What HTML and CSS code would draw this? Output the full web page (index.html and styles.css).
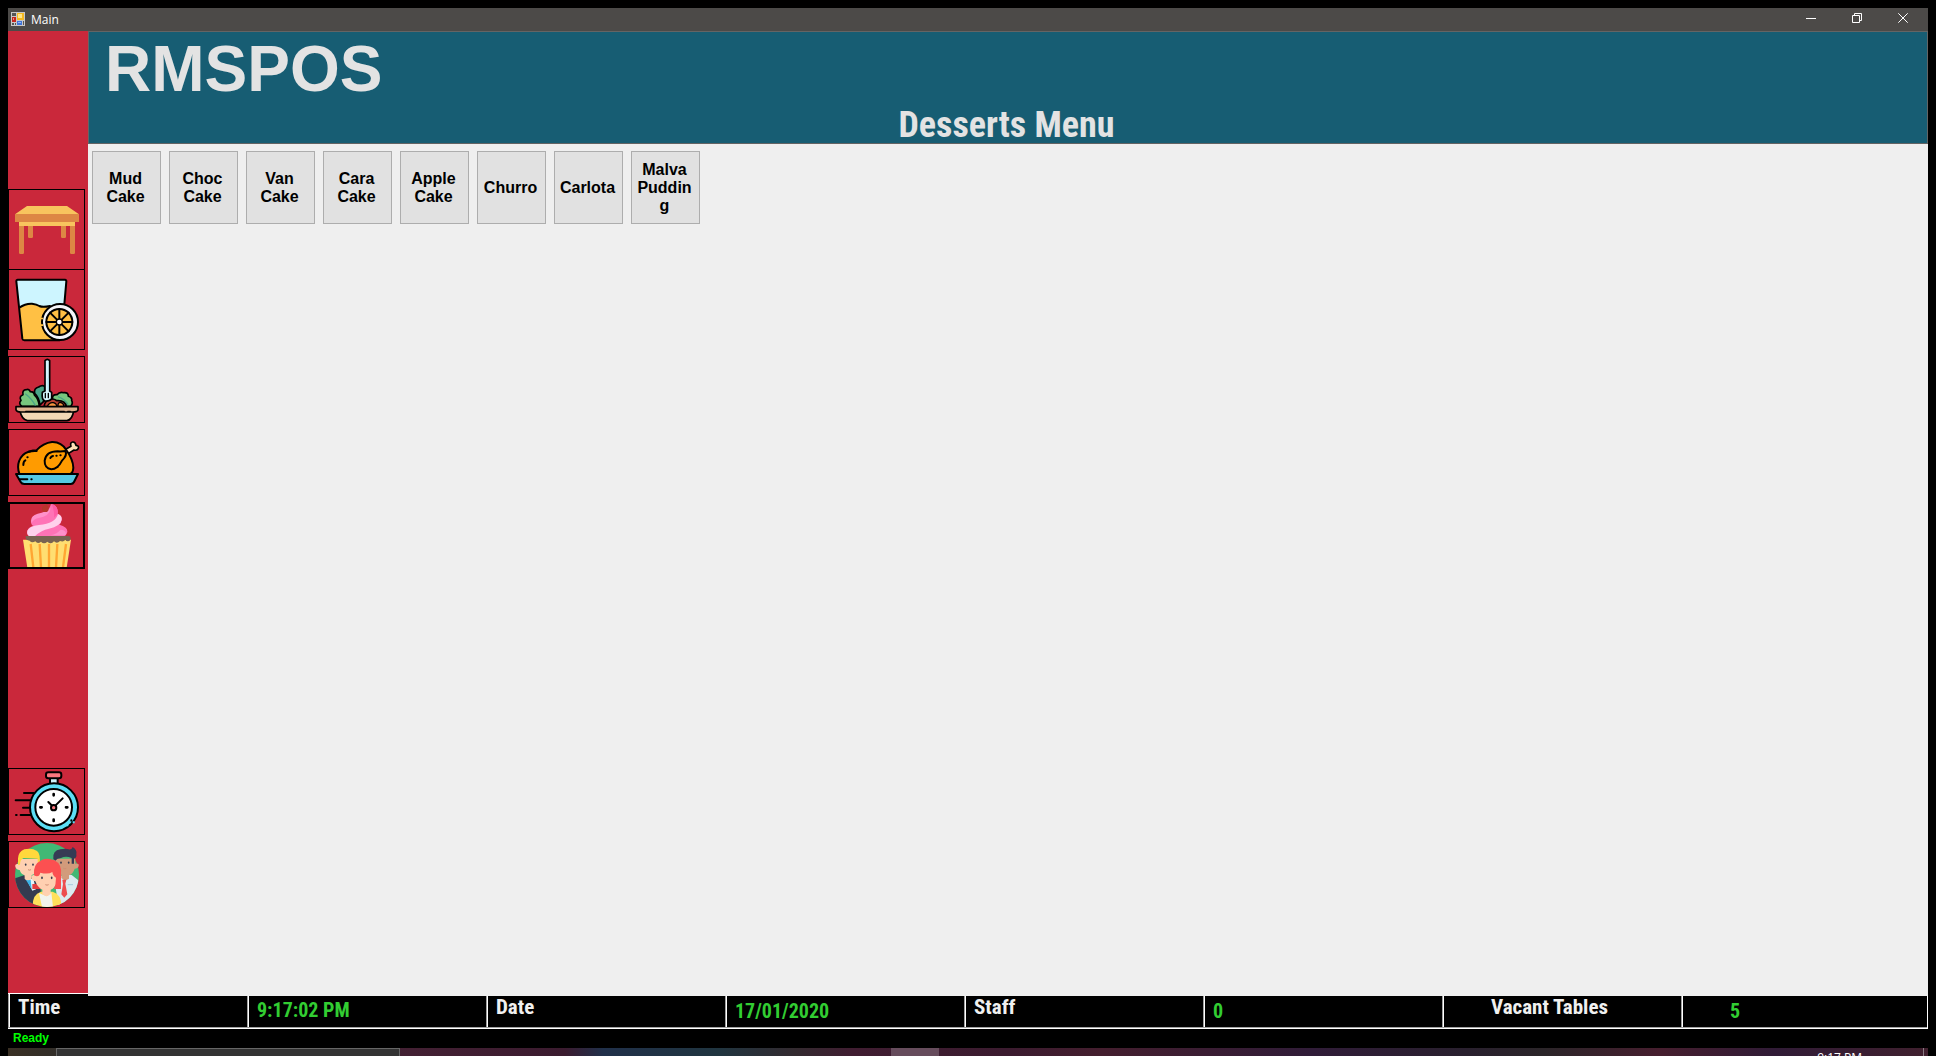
FILE: index.html
```html
<!DOCTYPE html>
<html lang="en">
<head>
<meta charset="utf-8">
<title>Main</title>
<link rel="stylesheet" href="styles.css">
</head>
<body>
<div class="titlebar">
  <svg class="app-icon" viewBox="0 0 14 14" aria-hidden="true">
    <path fill="#c8c8c8" d="M0 0h14v14H0z"/>
    <path fill="#555" d="M1 1h4v3H1zM1 11h2v2H1zM4 11h1v2H4zM12 9h1v4h-1z"/>
    <path fill="#c4261d" d="M1 5h4v5H1z"/><path fill="#f08a80" d="M2 6h1v2H2z"/>
    <path fill="#f5b921" d="M6 1h7v7H6z"/><path fill="#ffe68a" d="M7 2h4v4H7z"/>
    <path fill="#3f74d8" d="M6 9h5v4H6z"/><path fill="#8fb4f5" d="M7 10h3v1H7z"/>
  </svg>
  <span class="caption">Main</span>
  <div class="window-buttons">
    <button type="button" aria-label="Minimize"><svg viewBox="0 0 10 10"><path d="M0 5.500h10"/></svg></button>
    <button type="button" aria-label="Restore"><svg viewBox="0 0 10 10"><path d="M.5 2.500h7v7h-7zM2.500 2.500v-2h7v7h-2"/></svg></button>
    <button type="button" aria-label="Close"><svg viewBox="0 0 10 10"><path d="M.3.3l9.400 9.400M9.700.3L.3 9.700"/></svg></button>
  </div>
</div>

<div class="workspace">
  <nav class="sidebar">
    <div class="group">
      <button type="button" class="tile tall" aria-label="Tables">
        <svg viewBox="27 30 225 237">
          <path fill="#dd8744" d="M84 138h15v32q0 4-4 4h-7q-4 0-4-4zM183 138h15v32q0 4-4 4h-7q-4 0-4-4zM57 137h15v81q0 4-4 4h-7q-4 0-4-4zM210 137h15v81q0 4-4 4h-7q-4 0-4-4z"/>
          <path fill="#f8c45e" d="M57 124h168v14H57zM45 103l36-25h120l36 25z"/>
          <path fill="#dd8744" d="M45 102h192v24H45z"/>
        </svg>
      </button>
      <button type="button" class="tile tall joined" aria-label="Drinks">
        <svg viewBox="27 270 225 237">
          <path fill="#cdf5ff" d="M49 299h150l-15 181H69z"/>
          <path fill="#ffc044" d="M58 382q18-13 38-12 14 2 22 7 10 5 32 0l37-4-5 108H69z"/>
          <path class="ink w6" d="M58 383q18-13 38-12 14 2 22 7 10 5 32 0M53 299h142q4 0 4 5l-15 172q-1 5-5 5H73q-5 0-6-5L49 304q0-5 4-5z"/>
          <circle cx="180" cy="426" r="54" fill="#f3f5fa" stroke="#000" stroke-width="6"/>
          <circle cx="178" cy="426" r="39" fill="#ffc044" stroke="#000" stroke-width="6"/>
          <path class="ink w6" d="M178 387v78M139 426h78M150 398l56 56M206 398l-56 56"/>
          <circle cx="178" cy="426" r="9" fill="#fff" stroke="#000" stroke-width="4"/>
          <path stroke="#ffc044" stroke-width="7" d="M126 413v5M126 433v5"/>
        </svg>
      </button>
      <button type="button" class="tile" aria-label="Starters">
        <svg viewBox="27 36 225 195">
          <path fill="#77c67e" stroke="#000" stroke-width="5" stroke-linejoin="round" d="M66 184q-12-8-3-18-7-12 6-17-3-14 10-15 9-3 12 6 12 0 12 10 13 12 15 34z"/>
          <path fill="#4aa588" stroke="#000" stroke-width="5" d="M104 145q-3-16 12-19 10-7 18-2v42l-14 14q-3-23-16-35z"/>
          <path fill="#77c67e" stroke="#000" stroke-width="5" stroke-linejoin="round" d="M158 163q-3-15 13-14 8-10 20-6 14-2 14 11 12 4 10 13 5 8-3 17h-52z"/>
          <path fill="none" stroke="#4aa588" stroke-width="4" d="M76 146q22 17 31 38M174 155q20 7 30 24"/>
          <path fill="#ba3e30" stroke="#000" stroke-width="5" d="M132 185q4-23 23-23 10 0 15 5 26-2 29 18z"/>
          <path fill="#f79540" stroke="#000" stroke-width="4" d="M142 185q5-14 18-12 10 2 10 12zM174 184q-1-12 8-12 9 3 10 12z"/>
          <path fill="#d6f7ff" stroke="#000" stroke-width="5" stroke-linejoin="round" d="M135 47q7-8 14 0v91l6 4v19q-6 8-20 7-11-4-8-26l8-4z"/>
          <path class="ink w4" d="M136 145v13M145 145v13"/><path stroke="#a9dcea" stroke-width="4" d="M145 100v34"/>
          <path fill="#f2d8b5" stroke="#000" stroke-width="5" stroke-linejoin="round" d="M60 198h161q-4 26-20 29H82q-17-4-22-29z"/>
          <path fill="#ddb18d" stroke="#000" stroke-width="5" stroke-linejoin="round" d="M48 185h186v10q-2 6-16 6H63q-13 0-15-7z"/>
          <path class="ink w4" d="M77 199h116M203 199h8"/>
        </svg>
      </button>
      <button type="button" class="tile" aria-label="Mains">
        <svg viewBox="27 255 225 195">
          <path fill="#ffe0b6" stroke="#000" stroke-width="5" stroke-linejoin="round" d="M193 315l20-11q-4-11 5-13 8-1 10 10 10 1 7 9-3 8-13 5l-22 14z"/>
          <path fill="#ff9b00" stroke="#000" stroke-width="6" stroke-linejoin="round" d="M58 386q-7-20-1-37 8-23 29-29 14-4 23-4 21-22 47-25 28-1 43 24 20 28 21 53-1 16-9 19z"/>
          <path class="ink w6" d="M86 320q12-3 24-2M196 318q7 12-10 29-13 26-32 26-21-3-20-26 4-28 39-28 12 1 23-1M70 360q0-11 6-14M151 339q3-5 8-6M169 332h1M181 331h1M82 337h1M172 366h1"/>
          <path fill="#56c9e4" stroke="#000" stroke-width="6" stroke-linejoin="round" d="M48 387h186l-12 24q-3 6-10 6H73q-8 0-11-6z"/>
          <path class="ink w6" d="M59 403h23M94 403h1"/>
        </svg>
      </button>
      <button type="button" class="tile selected" aria-label="Desserts">
        <svg viewBox="30 477 219 189">
          <path fill="#ff73b6" d="M153 477q23 3 20 30 13 4 12 17-1 9-7 15 25 7 24 21-1 9-12 15H91q-13-6-8-20 5-10 18-12-9-3-8-17 3-14 26-19 28-4 34-30z"/>
          <path fill="#ffd1ec" d="M174 507q13 5 11 18-4 19-38 26-24 4-44 24H91q-12-5-9-18 6-13 35-17 50-5 57-33z"/>
          <path fill="#ff91ca" d="M95 519q3-11 30-16 18-5 27-13-4 25-36 29-13 2-22 15 0-10 1-15zM182 554q20 2 15 17h-45q20-5 30-17z"/>
          <path fill="#ff5ba6" d="M155 477q18 4 18 27-2 8-11 14 2-19-7-41z"/>
          <circle cx="136" cy="491" r="10" fill="#b7362c"/><path stroke="#b7362c" stroke-width="4" fill="none" d="M139 484q0-8 8-11"/>
          <path fill="#ffde71" d="M69 584h144l-13 84H82z"/>
          <path fill="#796351" d="M77 573h128q7 0 7 7-1 9-8 9-6 0-8-5-5 8-16 4-9 10-18 1-9 11-20 1-10 9-19 0-10 9-17-1-11 6-17-2-12 0-12-10 0-4 0-4z"/>
          <path fill="none" stroke="#ffa632" stroke-width="7" d="M92 597l8 70M119 597l4 70M147 597v70M172 597l-4 70M198 597l-9 70"/>
        </svg>
      </button>
    </div>
    <div class="group">
      <button type="button" class="tile" aria-label="Orders in progress">
        <svg viewBox="27 27 225 195">
          <path class="ink w6" d="M72 99h29M47 121h44M69 143h20M62 165h34M48 165h2"/>
          <path fill="#cef3fb" stroke="#000" stroke-width="6" d="M150 53h23v23h-23z"/>
          <rect x="138" y="37" width="46" height="18" rx="7" fill="#fa777f" stroke="#000" stroke-width="6"/>
          <circle cx="162" cy="142" r="72" fill="#5cdef5" stroke="#000" stroke-width="6"/>
          <circle cx="161" cy="142" r="55" fill="#fff" stroke="#000" stroke-width="6"/>
          <path class="ink w8" d="M161 102v4M161 179v4M121 142h4M198 142h4"/>
          <path class="ink w6" d="M145 126l12 12M166 137l22-22"/>
          <circle cx="161" cy="143" r="8" fill="#fa777f" stroke="#000" stroke-width="6"/>
          <path class="ink w6" d="M214 181v1M210 194v1"/>
          <path stroke="#5cdef5" stroke-width="6" d="M221 184v6M202 193v6"/>
        </svg>
      </button>
      <button type="button" class="tile" aria-label="Staff">
        <svg viewBox="27 246 225 195">
          <defs><clipPath id="badge"><path d="M27 246h225v99h-15a96 96 0 0 1-192 0H27z"/></clipPath></defs>
          <circle cx="141" cy="345" r="96" fill="#41b875"/>
          <g clip-path="url(#badge)">
            <path fill="#343b50" d="M45 355l30-10 30 10 17 35v55H45z"/>
            <path fill="#e4f3f7" d="M73 346l14 12 13-2 8 32-11 4z"/><path fill="#39b3e8" d="M76 357l16 3 3 28z"/>
            <path fill="#ffd0b1" d="M55 312q-11-2-9 8 2 9 13 10 4 13 15 16v11q10 8 21-1v-11q19-4 23-20V297H57z"/>
            <path fill="#ffd83c" d="M54 314v-19q1-20 19-27 23-5 38 5 11 8 8 39-7 2-6-16l-42-2q-11 4-11 20z"/>
            <path fill="#dce9f0" d="M164 360l25-15h26l20 16v80h-60z"/>
            <path fill="#d29b7b" d="M163 296h63v15q12-2 10 7-2 8-12 8-5 15-17 20v10l-12 6-11-8v-10q-19-5-21-27z"/>
            <path fill="#363b54" d="M160 297q-3-26 21-29 16-3 25 0 10 2 12-7 14 8 11 22 2 11-7 12v16h-7v-17q-18-7-32 0-12 1-17 8z"/>
            <path fill="#ed4c50" d="M187 359h12l-3 12 6 32-9 10-9-10 5-31z"/>
            <path stroke="#a8cadb" stroke-width="3" d="M203 374h16"/>
            <path fill="#e23c3f" d="M97 372h50v15H97z"/>
            <path fill="#ffe05b" d="M98 441q-2-38 25-46h35q28 8 26 46z"/>
            <path fill="#f1f3ed" d="M117 399l24 10 13-12 5 44h-33z"/>
            <path fill="#ffd0b1" d="M103 345q-10-1-8 10 2 9 11 9 6 18 21 25v13q12 13 25 0v-13q13-4 18-23v-31h-67z"/>
            <path fill="#fc5051" d="M102 346q-4-33 23-46 18-8 38 1 23 11 20 42v44h-21q6-16 6-34-9-4-11-17-12 8-36 2-4 16-19 8z"/>
            <path stroke="#343b50" stroke-width="5" stroke-linecap="round" d="M126 352v3M155 352v3M77 313v2M99 313v2M183 307v2M206 307v2"/>
            <path fill="none" stroke="#cf8e73" stroke-width="3" d="M136 374q5 3 10 0M84 329q5 3 9 0M190 325q5 3 9 0"/>
          </g>
        </svg>
      </button>
    </div>
  </nav>

  <main class="content">
    <header class="banner">
      <h1>RMSPOS</h1>
      <h2>Desserts Menu</h2>
    </header>
    <div class="items">
      <button type="button">Mud Cake</button>
      <button type="button">Choc Cake</button>
      <button type="button">Van Cake</button>
      <button type="button">Cara Cake</button>
      <button type="button">Apple Cake</button>
      <button type="button">Churro</button>
      <button type="button">Carlota</button>
      <button type="button">Malva Pudding</button>
    </div>
  </main>
</div>

<dl class="status">
  <dt>Time</dt><dd class="time">9:17:02 PM</dd>
  <dt>Date</dt><dd>17/01/2020</dd>
  <dt>Staff</dt><dd>0</dd>
  <dt class="indent">Vacant Tables</dt><dd class="indent">5</dd>
</dl>
<div class="ready">Ready</div>
<div class="taskbar">
  <div class="search"></div>
  <div class="active-app"></div>
  <div class="clock">9:17 PM</div>
</div>
</body>
</html>
```
FILE: styles.css
```css
* { box-sizing: border-box; }

body {
  display: flex;
  flex-direction: column;
  height: 100vh;
  margin: 0;
  padding: 8px 8px 0;
  overflow: hidden;
  background: #000;
  font-family: "Liberation Sans", Arial, sans-serif;
}

h1, h2, dl, dd { margin: 0; }
button { font: inherit; }

/* Title bar */
.titlebar {
  display: flex;
  flex: none;
  height: 23px;
  padding: 0 2px 0 3px;
  background: #4c4a48;
  color: #fff;
}
.app-icon { width: 14px; height: 14px; margin-top: 4px; }
.caption {
  margin-left: 6px;
  font: 12px/23px "Open Sans", "Noto Sans", sans-serif;
}
.window-buttons { display: flex; margin-left: auto; }
.window-buttons button {
  display: flex;
  justify-content: center;
  width: 46px;
  padding: 5px 0 0;
  border: 0;
  background: none;
}
.window-buttons svg {
  width: 10px;
  height: 10px;
  fill: none;
  stroke: #fff;
}

/* Sidebar */
.workspace { display: flex; flex: 1; min-height: 0; }
.sidebar {
  display: flex;
  flex: none;
  flex-direction: column;
  justify-content: space-between;
  width: 80px;
  padding: 158px 0 85px;
  background: #ca283b;
}
.group { display: flex; flex-direction: column; gap: 6px; }
.tile {
  width: 77px;
  height: 67px;
  padding: 0;
  border: 1px solid #000;
  background: none;
}
.tile.tall { height: 81px; }
.tile.joined { margin-top: -7px; }
.tile.selected { border-width: 2px; }
.tile svg { display: block; width: 100%; height: 100%; }
.ink {
  fill: none;
  stroke: #000;
  stroke-linecap: round;
  stroke-linejoin: round;
}
.w4 { stroke-width: 4px; }
.w6 { stroke-width: 6px; }
.w8 { stroke-width: 8px; }

/* Content; reaches over the top edge of the status strip */
.content {
  position: relative;
  flex: 1;
  min-width: 0;
  margin-bottom: -3px;
  background: #efefef;
}
.banner {
  height: 113px;
  border: 1px solid #646464;
  background: #175d73;
  color: #e3e3e3;
}
.banner h1 {
  padding-left: 16px;
  font-size: 64px;
  line-height: 74px;
}
.banner h2 {
  padding-right: 3px;
  font: bold 36px/38px "Liberation Sans Narrow", "Arial Narrow", "Roboto Condensed", Roboto, sans-serif;
  text-align: center;
}
.items {
  display: flex;
  flex-wrap: wrap;
  gap: 8px;
  padding: 7px 4px;
}
.items button {
  width: 69px;
  height: 73px;
  padding: 0 6px 0 4px;
  border: 1px solid #adadad;
  background: #e1e1e1;
  color: #000;
  font-size: 16px;
  font-weight: bold;
  line-height: 18px;
  overflow-wrap: anywhere;
}

/* Status strip */
.status {
  display: grid;
  flex: none;
  grid-template-columns: repeat(7, 239fr) 246fr;
  height: 36px;
  border: 1px solid #fff;
  border-left: 0;
  background: #000;
  font: bold 21px/24px "Liberation Sans Narrow", "Arial Narrow", "Roboto Condensed", Roboto, sans-serif;
}
.status > * {
  padding: 1px 9px 0;
  border-bottom: 1px solid #a0a0a0;
  border-left: 1px solid #a0a0a0;
  box-shadow: inset 1px 0 #fff;
}
.status dt { color: #f0f0f0; }
.status dd { padding-top: 5px; color: #32cd32; font-size: 20px; }
.status .time { padding-top: 4px; }
.status .indent { padding-left: 48px; }

.ready {
  flex: none;
  height: 19px;
  padding-left: 5px;
  color: #0f0;
  font-size: 12px;
  font-weight: bold;
  line-height: 18px;
}

/* Desktop taskbar */
.taskbar {
  display: flex;
  flex: none;
  height: 8px;
  overflow: hidden;
  background: linear-gradient(90deg, #3a3024 0, #302d29 3%, #432033 21%, #3b1b2f 29%, #20304a 31%, #203540 37%, #332a2f 41%, #401d31 44%, #3b1b2f 52%, #441e2e 57%, #301c38 68%, #29202e 76%, #2b2529 80%, #461e2e 86%, #301b36 92%, #40202e 100%);
}
.search {
  width: 344px;
  margin-left: 48px;
  border: 1px solid #666;
  border-bottom: 0;
  background: #333;
}
.active-app { width: 48px; margin-left: 491px; background: #664c5c; }
.clock {
  margin-left: auto;
  padding: 2px 61px 0 0;
  margin-right: 4px;
  border-right: 1px solid #8a7a84;
  color: #fff;
  font: 12px/16px "Open Sans", "Noto Sans", sans-serif;
}
```
